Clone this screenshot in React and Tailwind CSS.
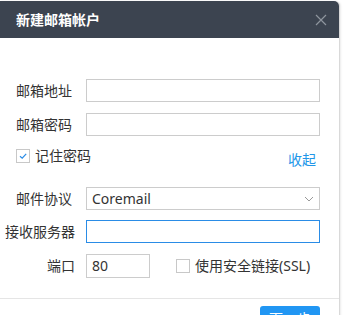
import React from "react";

const font = { fontFamily: '"Noto Sans", "Noto Sans CJK SC", sans-serif' };

function Field({ label, right, children, className = "" }) {
  return (
    <div className={`flex items-center ${className}`}>
      <div
        className={`w-[86px] shrink-0 text-[14px] leading-[14px] text-[#333] ${
          right ? "text-right pr-[11px]" : "pl-4"
        }`}
      >
        {label}
      </div>
      {children}
    </div>
  );
}

export default function App() {
  return (
    <div className="w-[344px] h-[315px] overflow-hidden bg-white" style={font}>
      <div className="mt-px w-[340px] h-[330px] rounded-tr-[5px] bg-white border-r border-[#d9d9d9] shadow-[1px_0_2px_rgba(0,0,0,0.08)]">
        {/* header */}
        <div className="h-[37px] rounded-tr-[5px] bg-[#3c4450] flex items-center justify-between pl-4 pr-[12px]">
          <span className="text-[14px] leading-[14px] font-bold text-white">新建邮箱帐户</span>
          <svg width="12" height="12" viewBox="0 0 12 12" className="mr-[0px]">
            <path d="M1 1 L11 11 M11 1 L1 11" stroke="#8e959e" strokeWidth="1.2" fill="none" />
          </svg>
        </div>

        <div className="flex flex-col">
          <Field label="邮箱地址" className="mt-[41px]">
            <input className="w-[234px] h-[23px] border border-[#cccccc] outline-none bg-white" />
          </Field>

          <Field label="邮箱密码" className="mt-[11px]">
            <input type="password" className="w-[234px] h-[23px] border border-[#cccccc] outline-none bg-white" />
          </Field>

          <div className="mt-[13px] flex items-start pl-4 pr-[23px]">
            <div className="flex items-center">
              <span className="w-[14px] h-[14px] border border-[#c8c8c8] bg-white flex items-center justify-center">
                <svg width="10" height="10" viewBox="0 0 10 10">
                  <path d="M2 5.2 L4.2 7.2 L8.2 2.8" stroke="#2a8ce6" strokeWidth="1.2" fill="none" />
                </svg>
              </span>
              <span className="ml-[5px] text-[14px] leading-[14px] text-[#333]">记住密码</span>
            </div>
            <span className="ml-auto mt-[4px] text-[14px] leading-[14px] text-[#2196e8]">收起</span>
          </div>

          <Field label="邮件协议" className="mt-[20px]">
            <div className="w-[234px] h-[23px] border border-[#cccccc] bg-white flex items-center justify-between pl-[5px] pr-[5px]">
              <span className="text-[14px] leading-[14px] text-[#333]">Coremail</span>
              <svg width="10" height="6" viewBox="0 0 10 6">
                <path d="M1 1 L5 5 L9 1" stroke="#999" strokeWidth="1" fill="none" />
              </svg>
            </div>
          </Field>

          <Field label="接收服务器" right className="mt-[10px]">
            <input className="w-[234px] h-[23px] border border-[#2a8ce6] outline-none bg-white" />
          </Field>

          <Field label="端口" right className="mt-[11px]">
            <div className="w-[64px] h-[24px] border border-[#cccccc] bg-white flex items-center pl-[5px] text-[14px] leading-[14px] text-[#333]">
              80
            </div>
            <span className="ml-[26px] w-[14px] h-[14px] border border-[#c8c8c8] bg-white" />
            <span className="ml-[5px] text-[14px] leading-[14px] text-[#333]">使用安全链接(SSL)</span>
          </Field>

          <div className="mt-[20px] border-t border-[#e5e5e5]" />

          <div className="mt-[7px] flex justify-end pr-[19px]">
            <button className="w-[60px] h-[26px] rounded-[3px] bg-[#2196f3] text-white text-[14px] leading-[14px]">
              下一步
            </button>
          </div>
        </div>
      </div>
    </div>
  );
}
